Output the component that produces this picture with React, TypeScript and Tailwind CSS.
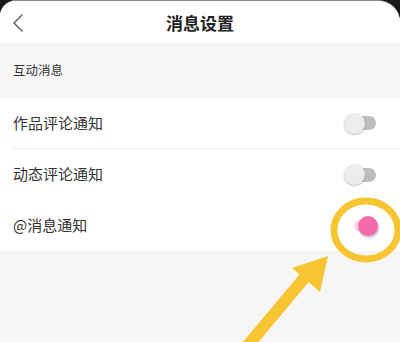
import React from "react";

const FONT = { fontFamily: '"Noto Sans CJK SC", "Noto Sans", sans-serif' };

const ROWS: { label: string; on: boolean; divider: boolean }[] = [
  { label: "作品评论通知", on: false, divider: true },
  { label: "动态评论通知", on: false, divider: false },
  { label: "@消息通知", on: true, divider: false },
];

function Toggle({ on }: { on: boolean }) {
  return (
    <div className="relative w-[34px] h-[22px] flex items-center">
      <div
        className={
          on
            ? "absolute left-[10px] w-[22px] h-[12px] rounded-full bg-[#fbd3e6]"
            : "absolute left-[10px] w-[22px] h-[14px] rounded-full bg-[#bdbdbd]"
        }
      />
      <div
        className={
          on
            ? "absolute left-[14px] w-[20px] h-[20px] rounded-full bg-[#f56aa8] shadow-[1px_2px_2px_rgba(120,60,120,0.35)]"
            : "absolute left-0 w-[21px] h-[21px] rounded-full bg-[#ececec] shadow-[0_1px_2px_rgba(0,0,0,0.25)]"
        }
      />
    </div>
  );
}

export default function App() {
  return (
    <div className="w-[400px] h-[342px] bg-[#1a1a1a] overflow-hidden relative" style={FONT}>
      <div className="h-full flex flex-col bg-[#f6f6f6] rounded-tl-[16px] rounded-tr-[22px] overflow-hidden border-t border-[#8a8a8a]">
        {/* 标题栏 */}
        <div className="h-[42px] bg-white flex items-center relative">
          <svg className="absolute left-[11px] top-[12px]" width="14" height="20" viewBox="0 0 14 20">
            <path d="M11 2 L3 10 L11 18" fill="none" stroke="#666" strokeWidth="1.6" strokeLinecap="round" strokeLinejoin="round" />
          </svg>
          <div className="flex-1 text-center text-[17px] font-bold text-[#222] leading-none">消息设置</div>
        </div>

        {/* 分组 */}
        <div className="h-[55px] flex items-center px-[13px] text-[12.5px] text-[#333]">互动消息</div>

        {/* 开关列表 */}
        <div className="bg-white flex flex-col">
          {ROWS.map((r) => (
            <div key={r.label} className="h-[51px] flex items-center pl-[13px]">
              <div
                className={
                  "flex-1 h-full flex items-center pr-[22px] " +
                  (r.divider ? "border-b border-[#ececec]" : "")
                }
              >
                <span className="flex-1 text-[15px] text-[#333]">{r.label}</span>
                <Toggle on={r.on} />
              </div>
            </div>
          ))}
        </div>
        <div className="flex-1" />
      </div>

      {/* 标注：黄圈 + 箭头 */}
      <svg className="absolute left-0 top-0 pointer-events-none" width="400" height="342" viewBox="0 0 400 342">
        <ellipse cx="366" cy="230" rx="32" ry="29" fill="none" stroke="#f6c531" strokeWidth="7" />
        <path d="M244 350 L306 276" stroke="#f6c531" strokeWidth="12" strokeLinecap="butt" />
        <path d="M328 256 L292 268 L320 292 Z" fill="#f6c531" />
      </svg>
    </div>
  );
}
